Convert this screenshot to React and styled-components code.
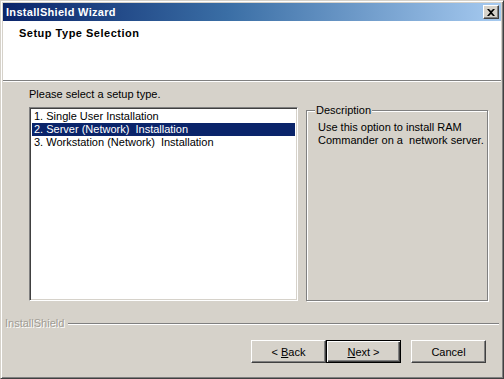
import React from 'react';
import styled, { createGlobalStyle } from 'styled-components';

const face = '#d6d2ca';

const GlobalStyle = createGlobalStyle`
  html, body {
    margin: 0;
    padding: 0;
    background: ${face};
  }
  body {
    font-family: "Liberation Sans", Arial, sans-serif;
    font-size: 11px;
    color: #000;
  }
`;

const Window = styled.div`
  box-sizing: border-box;
  width: 504px;
  height: 379px;
  display: flex;
  flex-direction: column;
  background: ${face};
  border-top: 1px solid ${face};
  border-left: 1px solid ${face};
  border-right: 1px solid #404040;
  border-bottom: 1px solid #404040;
  box-shadow: inset 1px 1px 0 #fff, inset -1px -1px 0 #808080;
  padding: 2px;
`;

const TitleBar = styled.div`
  height: 18px;
  flex: none;
  display: flex;
  align-items: center;
  justify-content: space-between;
  padding: 0 2px 0 3px;
  background: linear-gradient(to right, #0a246a 0%, #3a6ea5 45%, #a6caf0 100%);
`;

const Title = styled.span`
  color: #fff;
  font-weight: bold;
  font-size: 11px;
  letter-spacing: 0.3px;
`;

const CloseButton = styled.button`
  box-sizing: border-box;
  width: 16px;
  height: 14px;
  padding: 0;
  display: flex;
  align-items: center;
  justify-content: center;
  background: ${face};
  border-top: 1px solid #fff;
  border-left: 1px solid #fff;
  border-right: 1px solid #404040;
  border-bottom: 1px solid #404040;
  box-shadow: inset -1px -1px 0 #808080;
`;

const Header = styled.div`
  height: 60px;
  flex: none;
  background: #fff;
  border-bottom: 1px solid #808080;
  box-shadow: 0 1px 0 #fff;
  padding: 6px 16px 0;
  box-sizing: border-box;
`;

const HeaderTitle = styled.div`
  font-weight: bold;
  line-height: 13px;
  letter-spacing: 0.5px;
`;

const Body = styled.div`
  flex: 1;
  display: flex;
  flex-direction: column;
  padding: 7px 12px 0 26px;
`;

const Prompt = styled.div`
  line-height: 13px;
  margin-bottom: 3px;
`;

const ContentRow = styled.div`
  display: flex;
  align-items: flex-start;
  gap: 8px;
`;

const ListBox = styled.div`
  box-sizing: border-box;
  width: 269px;
  height: 194px;
  margin-top: 3px;
  background: #fff;
  border-top: 1px solid #808080;
  border-left: 1px solid #808080;
  border-right: 1px solid #fff;
  border-bottom: 1px solid #fff;
  box-shadow: inset 1px 1px 0 #404040, inset -1px -1px 0 ${face};
  padding: 2px 2px;
`;

const ListItem = styled.div`
  height: 13px;
  line-height: 13px;
  padding-left: 2px;
  white-space: pre;
  background: ${(p) => (p.selected ? '#0a246a' : 'transparent')};
  color: ${(p) => (p.selected ? '#fff' : '#000')};
`;

const Group = styled.fieldset`
  box-sizing: border-box;
  width: 182px;
  height: 197px;
  margin: 0;
  padding: 4px 0 0 11px;
  border: 1px solid #808080;
  box-shadow: inset 1px 1px 0 #fff, 1px 1px 0 #fff;
`;

const Legend = styled.legend`
  padding: 0 1px;
  margin-left: -3px;
  line-height: 13px;
  background: ${face};
`;

const Description = styled.div`
  line-height: 13px;
  white-space: pre-wrap;
`;

const Brand = styled.div`
  display: flex;
  align-items: center;
  gap: 4px;
  margin: 16px -10px 0 -24px;
  line-height: 13px;
`;

const BrandText = styled.span`
  color: #a09c94;
  text-shadow: 1px 1px 0 #fff;
`;

const BrandLine = styled.div`
  flex: 1;
  height: 1px;
  background: #808080;
  box-shadow: 0 1px 0 #fff;
`;

const ButtonRow = styled.div`
  display: flex;
  justify-content: flex-end;
  margin-top: 10px;
  margin-right: 3px;
`;

const Button = styled.button`
  box-sizing: border-box;
  width: 75px;
  height: 23px;
  margin-left: ${(p) => p.$gap || 0}px;
  padding: 0;
  font-family: "Liberation Sans", Arial, sans-serif;
  font-size: 11px;
  color: #000;
  background: ${face};
  border-top: 1px solid ${(p) => (p.$default ? '#000' : '#fff')};
  border-left: 1px solid ${(p) => (p.$default ? '#000' : '#fff')};
  border-right: 1px solid ${(p) => (p.$default ? '#000' : '#404040')};
  border-bottom: 1px solid ${(p) => (p.$default ? '#000' : '#404040')};
  box-shadow: ${(p) =>
    p.$default
      ? 'inset 1px 1px 0 #fff, inset -1px -1px 0 #404040, inset -2px -2px 0 #808080'
      : 'inset -1px -1px 0 #808080'};

  u {
    text-decoration: underline;
    text-underline-offset: 1px;
  }
`;

const items = [
  '1. Single User Installation',
  '2. Server (Network)  Installation',
  '3. Workstation (Network)  Installation',
];

const App = () => {
  return (
    <>
      <GlobalStyle />
      <Window>
        <TitleBar>
          <Title>InstallShield Wizard</Title>
          <CloseButton>
            <svg width="8" height="7" viewBox="0 0 8 7">
              <path d="M0 0h2l2 2 2-2h2L5 3.5 8 7H6L4 5 2 7H0l3-3.5z" fill="#000" />
            </svg>
          </CloseButton>
        </TitleBar>
        <Header>
          <HeaderTitle>Setup Type Selection</HeaderTitle>
        </Header>
        <Body>
          <Prompt>Please select a setup type.</Prompt>
          <ContentRow>
            <ListBox>
              {items.map((item, i) => (
                <ListItem key={item} selected={i === 1}>
                  {item}
                </ListItem>
              ))}
            </ListBox>
            <Group>
              <Legend>Description</Legend>
              <Description>
                Use this option to install RAM{'\n'}Commander on a  network server.
              </Description>
            </Group>
          </ContentRow>
          <Brand>
            <BrandText>InstallShield</BrandText>
            <BrandLine />
          </Brand>
          <ButtonRow>
            <Button>
              &lt; <u>B</u>ack
            </Button>
            <Button $default>
              <u>N</u>ext &gt;
            </Button>
            <Button $gap={10}>Cancel</Button>
          </ButtonRow>
        </Body>
      </Window>
    </>
  );
};

export default App;
